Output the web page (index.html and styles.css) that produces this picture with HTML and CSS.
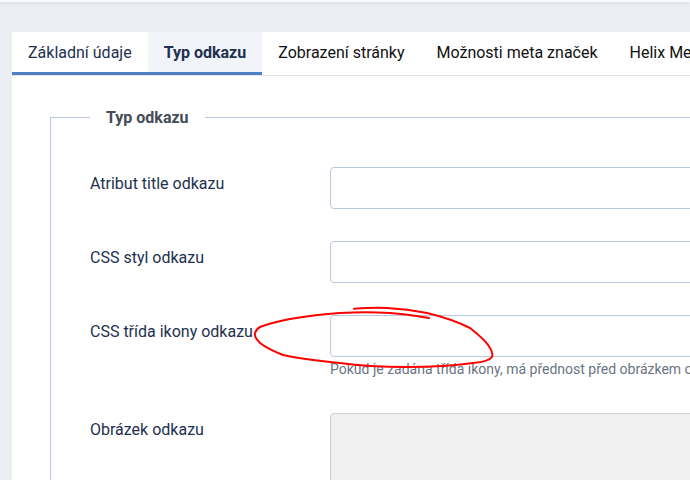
FILE: index.html
```html
<!DOCTYPE html>
<html lang="cs">
<head>
<meta charset="utf-8">
<title>Typ odkazu</title>
<link rel="stylesheet" href="styles.css">
</head>
<body>
<header class="topbar"></header>
<main class="content">
  <nav class="tabs">
    <a class="tab tab-first">Základní údaje</a>
    <a class="tab tab-active">Typ odkazu</a>
    <a class="tab">Zobrazení stránky</a>
    <a class="tab">Možnosti meta značek</a>
    <a class="tab">Helix Mega Menu</a>
  </nav>
  <section class="panel">
    <fieldset class="group">
      <legend class="group-title">Typ odkazu</legend>
      <div class="row">
        <label class="row-label">Atribut title odkazu</label>
        <div class="row-control"><input class="field" type="text"></div>
      </div>
      <div class="row">
        <label class="row-label">CSS styl odkazu</label>
        <div class="row-control"><input class="field" type="text"></div>
      </div>
      <div class="row row-hinted">
        <label class="row-label">CSS třída ikony odkazu</label>
        <div class="row-control">
          <input class="field" type="text">
          <div class="hint">Pokud je zadána třída ikony, má přednost před obrázkem odkazu.</div>
        </div>
      </div>
      <div class="row">
        <label class="row-label">Obrázek odkazu</label>
        <div class="row-control"><div class="image-box"></div></div>
      </div>
    </fieldset>
  </section>
</main>
<svg class="scribble" width="690" height="480" viewBox="0 0 690 480" aria-hidden="true">
  <path d="M354 308.7C365 308 376 307.5 387 308C402 308.7 415 310.5 427 313C444 317 458 322 470 328C479 335 487 342 490 348C492 351 493 354 492 357C490 360 483 362 473 363C452 366 430 367 407 367C384 367 361 366 340 363C320 361 300 359 283 355C273 351 265 347 260 343C256 339 254 336 255 333C256 330 258 328 260 327C270 323 280 321 290 319C307 316 323 314 340 313C357 312 374 312 390 313C404 314 417 316 429 318"/>
</svg>
</body>
</html>
```
FILE: styles.css
```css
* { box-sizing: border-box; }
html, body { height: 100%; }
body {
  margin: 0;
  background: #ebeff4;
  font-family: Roboto, "Liberation Sans", sans-serif;
  font-size: 16px;
  color: #22304f;
  overflow: hidden;
}
.topbar {
  height: 2px;
  background: #f8f9fb;
  box-shadow: 0 1px 4px rgba(30, 50, 80, .14);
}
.content {
  padding: 30px 0 0 12px;
  width: 900px;
}
.tabs {
  display: flex;
  height: 44px;
  background: #fff;
  border-bottom: 1px solid #dfe4ec;
  white-space: nowrap;
}
.tab {
  height: 43px;
  padding: 0 16px;
  line-height: 42px;
  font-size: 16px;
  color: #111;
}
.tab-first {
  color: #22304f;
  border-bottom: 3px solid #5080c4;
}
.tab-active {
  background: #f1f4f9;
  border-bottom: 3px solid #5080c4;
  font-weight: 700;
  color: #22304f;
}
.panel {
  background: #fff;
  padding: 32px 38px 0;
  height: 420px;
}
.group {
  margin: 0;
  padding: 40px 39px 0;
  border: 1px solid #b9c9e2;
  border-radius: 0;
  min-width: 0;
}
.group-title {
  padding: 0 16px;
  font-size: 16px;
  font-weight: 700;
  line-height: 19px;
  color: #444b57;
}
.row {
  display: flex;
  align-items: flex-start;
  margin-bottom: 32px;
}
.row-hinted { margin-bottom: 35px; }
.row-label {
  flex: 0 0 240px;
  padding-top: 7px;
  line-height: 19px;
  font-size: 16px;
  white-space: nowrap;
  color: #22304f;
}
.row-control { flex: 1; min-width: 0; }
.field {
  display: block;
  width: 100%;
  height: 42px;
  border: 1px solid #b9c9e2;
  border-radius: 4px;
  background: #fff;
}
.hint {
  margin-top: 3px;
  font-size: 14px;
  line-height: 18px;
  color: #6a7583;
  white-space: nowrap;
}
.image-box {
  height: 120px;
  border: 1px solid #cfcfcf;
  border-radius: 4px;
  background: #f0f0f0;
}
.scribble {
  position: absolute;
  left: 0;
  top: 0;
  pointer-events: none;
}
.scribble path {
  fill: none;
  stroke: #f00;
  stroke-width: 2;
  stroke-linecap: round;
}
```
